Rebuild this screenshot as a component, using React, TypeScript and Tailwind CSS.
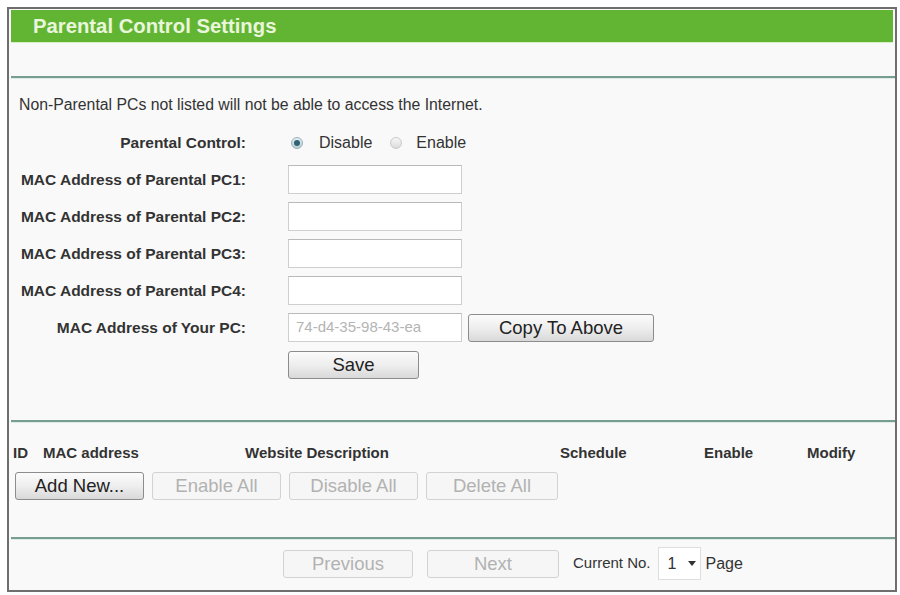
const font = { fontFamily: '"Liberation Sans", Arial, sans-serif' };

function Field({ value }: { value?: string }) {
  return (
    <div className="flex h-[29px] w-[174px] items-center border border-[#cfcfcf] border-t-[#b9b9b9] bg-white pl-[7px] text-[15px] text-[#b4b4b4]">
      {value}
    </div>
  );
}

function Btn({
  children,
  disabled = false,
  className = "",
}: {
  children: React.ReactNode;
  disabled?: boolean;
  className?: string;
}) {
  const look = disabled
    ? "border-[#d2d2d2] bg-[#f6f6f6] text-[#b2b2b2]"
    : "border-[#8c8c8c] bg-gradient-to-b from-[#fbfbfb] via-[#eeeeee] to-[#d9d9d9] text-[#222]";
  return (
    <div
      className={`flex h-[28px] items-center justify-center rounded-[3px] border text-[18.5px] ${look} ${className}`}
    >
      {children}
    </div>
  );
}

function Radio({ checked }: { checked?: boolean }) {
  return checked ? (
    <span className="flex h-[12px] w-[12px] shrink-0 items-center justify-center rounded-full border border-[#9bb0b8] bg-gradient-to-b from-[#e4eef2] to-[#bccdd4]">
      <span className="block h-[6px] w-[6px] rounded-full bg-[#2f6475]" />
    </span>
  ) : (
    <span className="block h-[12px] w-[12px] shrink-0 rounded-full border border-[#cacaca] bg-gradient-to-b from-[#f6f6f6] to-[#dcdcdc]" />
  );
}

function Row({ label, children }: { label: string; children: React.ReactNode }) {
  return (
    <div className="flex h-[37px] items-center">
      <div className="w-[237px] text-right text-[15.5px] font-bold text-[#333]">{label}</div>
      <div className="ml-[42px] flex items-center">{children}</div>
    </div>
  );
}

function Line() {
  return <div className="ml-[2px] h-[2px] bg-[#789d93] shadow-[0_1px_0_#dcebe6]" />;
}

export default function App() {
  return (
    <div className="h-[595px] w-[900px] bg-white pl-[7px] pt-[7px]" style={font}>
      <div className="flex h-[585px] w-[890px] flex-col border-2 border-[#6e6e6e] bg-[#f9f9f9]">
        <div className="mx-[2px] mt-[1px] flex h-[32px] items-center bg-[#62b532] pl-[22px] text-[20.3px] font-bold text-[#e9f6dc] shadow-[0_1px_0_#d6efc4]">
          Parental Control Settings
        </div>
        <div className="h-[34px]" />
        <Line />

        <div className="pb-[10px] pl-[10px] pt-[18px] text-[15.8px] leading-[18px] text-[#333]">
          Non-Parental PCs not listed will not be able to access the Internet.
        </div>

        <Row label="Parental Control:">
          <div className="ml-[3px] flex items-center text-[16px] text-[#333]">
            <Radio checked />
            <span className="ml-[16px]">Disable</span>
            <span className="ml-[18px]">
              <Radio />
            </span>
            <span className="ml-[14px]">Enable</span>
          </div>
        </Row>
        <Row label="MAC Address of Parental PC1:">
          <Field />
        </Row>
        <Row label="MAC Address of Parental PC2:">
          <Field />
        </Row>
        <Row label="MAC Address of Parental PC3:">
          <Field />
        </Row>
        <Row label="MAC Address of Parental PC4:">
          <Field />
        </Row>
        <Row label="MAC Address of Your PC:">
          <Field value="74-d4-35-98-43-ea" />
          <Btn className="ml-[6px] w-[186px]">Copy To Above</Btn>
        </Row>
        <div className="flex h-[37px] items-center pl-[279px]">
          <Btn className="w-[131px]">Save</Btn>
        </div>

        <div className="h-[37px]" />
        <Line />

        <div className="mt-[20px] grid h-[18px] grid-cols-[30px_202px_315px_144px_103px_1fr] items-center pl-[4px] text-[15px] font-bold text-[#333]">
          <span>ID</span>
          <span>MAC address</span>
          <span>Website Description</span>
          <span>Schedule</span>
          <span>Enable</span>
          <span>Modify</span>
        </div>

        <div className="mt-[12px] flex gap-[8px] pl-[6px]">
          <Btn className="w-[129px]">Add New...</Btn>
          <Btn disabled className="w-[129px]">
            Enable All
          </Btn>
          <Btn disabled className="w-[129px]">
            Disable All
          </Btn>
          <Btn disabled className="w-[132px]">
            Delete All
          </Btn>
        </div>

        <div className="h-[37px]" />
        <Line />

        <div className="mt-[8px] flex items-center pl-[274px] text-[15px] text-[#333]">
          <Btn disabled className="w-[130px]">
            Previous
          </Btn>
          <Btn disabled className="ml-[14px] w-[132px]">
            Next
          </Btn>
          <span className="ml-[14px]">Current No.</span>
          <div className="ml-[7px] flex h-[33px] w-[43px] items-center border border-[#dedede] bg-white pl-[9px] text-[16px]">
            1
            <svg className="ml-[12px]" width="8" height="5" viewBox="0 0 8 5">
              <path d="M0 0h8L4 5z" fill="#333" />
            </svg>
          </div>
          <span className="ml-[5px] text-[16px]">Page</span>
        </div>
      </div>
    </div>
  );
}
